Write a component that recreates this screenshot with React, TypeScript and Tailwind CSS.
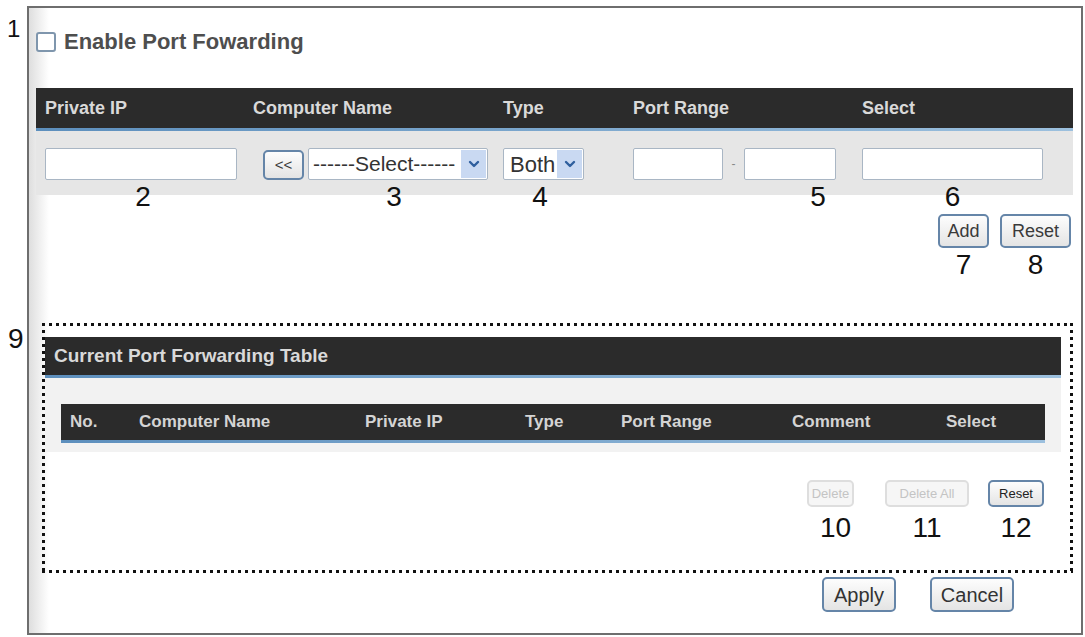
import React from "react";

function Chevron() {
  return (
    <svg width="14" height="14" viewBox="0 0 14 14" aria-hidden="true">
      <path d="M3 5 L7 9 L11 5" fill="none" stroke="#2f5f9e" strokeWidth="2.4" strokeLinecap="round" strokeLinejoin="round" />
    </svg>
  );
}

function Num({ n, className = "" }: { n: string; className?: string }) {
  return <div className={`text-[28px] leading-none text-[#111] text-center ${className}`}>{n}</div>;
}

const btn =
  "flex items-center justify-center border-2 border-[#6585a8] rounded-[5px] bg-[linear-gradient(#fdfdfd,#e4e4e4)] text-[#3a3a3a]";
const btnOff =
  "flex items-center justify-center border-2 border-[#dedede] rounded-[5px] bg-[#f6f6f6] text-[#c4c4c4]";
const field = "h-[32px] border border-[#a9b6c4] bg-white rounded-[2px]";

export default function App() {
  return (
    <div className="relative w-[1085px] h-[637px] bg-white pt-[6px] pl-[27px] font-['Liberation_Sans',Arial,sans-serif]">
      <span className="absolute left-[7px] top-[17px] text-[24px] leading-none text-[#111]">1</span>
      <span className="absolute left-[8px] top-[325px] text-[28px] leading-none text-[#111]">9</span>

      <div className="w-[1056px] h-[629px] border-2 border-[#6e6e6e] bg-[linear-gradient(to_right,#dedede,#ffffff_20px)] pl-[7px] pt-[23px]">
        {/* enable toggle */}
        <div className="flex items-center h-[21px] gap-[8px]">
          <div className="w-[20px] h-[20px] border-2 border-[#7f96ad] rounded-[3px] bg-white" />
          <span className="text-[22px] font-bold text-[#4e4e4e]">Enable Port Fowarding</span>
        </div>

        {/* rule editor */}
        <div className="w-[1037px] mt-[36px]">
          <div className="h-[40px] bg-[#2b2b2b] grid grid-cols-[208px_250px_130px_229px_1fr] pl-[9px] items-center text-[18px] font-bold text-[#d9d9d9]">
            <span>Private IP</span>
            <span>Computer Name</span>
            <span>Type</span>
            <span>Port Range</span>
            <span>Select</span>
          </div>
          <div className="h-[3px] bg-[linear-gradient(to_right,#5d8fbd,#9cc0de)]" />
          <div className="h-[64px] bg-[#e6e6e6] pt-[17px] pl-[9px] grid grid-cols-[208px_250px_130px_229px_1fr] items-start">
            <div className="flex flex-col">
              <div className={`${field} w-[192px]`} />
              <Num n="2" className="mt-[3px] w-[196px]" />
            </div>
            <div className="flex ml-[10px] gap-[4px] items-start">
              <div className={`${btn} shrink-0 w-[41px] h-[30px] mt-[2px] text-[15px] text-[#2c4c74]`}>&lt;&lt;</div>
              <div className="flex flex-col shrink-0">
                <div className={`${field} w-[180px] flex items-center justify-between pl-[4px] pr-[1px] text-[21px] text-[#333] overflow-hidden`}>
                  <span className="whitespace-nowrap">------Select------</span>
                  <span className="shrink-0 w-[25px] h-[28px] bg-[#c9d9f2] flex items-center justify-center">
                    <Chevron />
                  </span>
                </div>
                <Num n="3" className="mt-[3px] w-[172px]" />
              </div>
            </div>
            <div className="flex flex-col w-[81px]">
              <div className={`${field} flex items-center justify-between pl-[6px] pr-[1px] text-[22px] text-[#333]`}>
                <span>Both</span>
                <span className="w-[25px] h-[28px] bg-[#c9d9f2] flex items-center justify-center">
                  <Chevron />
                </span>
              </div>
              <Num n="4" className="mt-[3px] w-[74px]" />
            </div>
            <div className="flex items-start">
              <div className={`${field} w-[90px]`} />
              <span className="w-[21px] h-[32px] flex items-center justify-center text-[12px] text-[#888]">-</span>
              <div className="flex flex-col">
                <div className={`${field} w-[92px]`} />
                <Num n="5" className="mt-[3px] pl-[56px]" />
              </div>
            </div>
            <div className="flex flex-col w-[181px]">
              <div className={field} />
              <Num n="6" className="mt-[3px]" />
            </div>
          </div>

          <div className="flex justify-end gap-[11px] mr-[2px] mt-[19px]">
            <div className="flex flex-col items-center">
              <div className={`${btn} w-[51px] h-[34px] text-[18px]`}>Add</div>
              <Num n="7" className="mt-[3px]" />
            </div>
            <div className="flex flex-col items-center">
              <div className={`${btn} w-[71px] h-[34px] text-[18px]`}>Reset</div>
              <Num n="8" className="mt-[3px]" />
            </div>
          </div>
        </div>

        {/* current rules */}
        <div className="ml-[6px] mt-[44px] w-[1031px] h-[250px] p-[3px] [background:repeating-linear-gradient(90deg,#111_0_3px,transparent_3px_7px)_top_left/100%_3px_no-repeat,repeating-linear-gradient(90deg,#111_0_3px,transparent_3px_7px)_bottom_left/100%_3px_no-repeat,repeating-linear-gradient(180deg,#111_0_3px,transparent_3px_7px)_top_left/3px_100%_no-repeat,repeating-linear-gradient(180deg,#111_0_3px,transparent_3px_7px)_top_right/3px_100%_no-repeat]">
          <div className="w-[1016px] mt-[11px]">
            <div className="h-[38px] bg-[#2b2b2b] flex items-center pl-[9px] text-[19px] font-bold text-[#d9d9d9]">
              Current Port Forwarding Table
            </div>
            <div className="h-[3px] bg-[linear-gradient(to_right,#5d8fbd,#9cc0de)]" />
            <div className="h-[74px] bg-[#f2f2f2] pt-[26px] pl-[16px]">
              <div className="w-[984px] h-[36px] bg-[#2b2b2b] grid grid-cols-[69px_226px_160px_96px_171px_154px_1fr] pl-[9px] items-center text-[17px] font-bold text-[#d4d4d4]">
                <span>No.</span>
                <span>Computer Name</span>
                <span>Private IP</span>
                <span>Type</span>
                <span>Port Range</span>
                <span>Comment</span>
                <span>Select</span>
              </div>
              <div className="w-[984px] h-[3px] bg-[linear-gradient(to_right,#5d8fbd,#9cc0de)]" />
            </div>
          </div>

          <div className="flex justify-end mr-[26px] mt-[28px]">
            <div className="flex flex-col items-center">
              <div className={`${btnOff} w-[47px] h-[27px] text-[13px]`}>Delete</div>
              <Num n="10" className="mt-[7px] pl-[10px]" />
            </div>
            <div className="flex flex-col items-center ml-[31px]">
              <div className={`${btnOff} w-[84px] h-[27px] text-[13px]`}>Delete All</div>
              <Num n="11" className="mt-[7px]" />
            </div>
            <div className="flex flex-col items-center ml-[19px]">
              <div className={`${btn} w-[56px] h-[27px] text-[13px] text-[#222]`}>Reset</div>
              <Num n="12" className="mt-[7px]" />
            </div>
          </div>
        </div>

        <div className="w-[1037px] flex justify-end gap-[34px] pr-[59px] mt-[4px]">
          <div className={`${btn} w-[74px] h-[35px] text-[20px] text-[#333]`}>Apply</div>
          <div className={`${btn} w-[84px] h-[35px] text-[20px] text-[#333]`}>Cancel</div>
        </div>
      </div>
    </div>
  );
}
